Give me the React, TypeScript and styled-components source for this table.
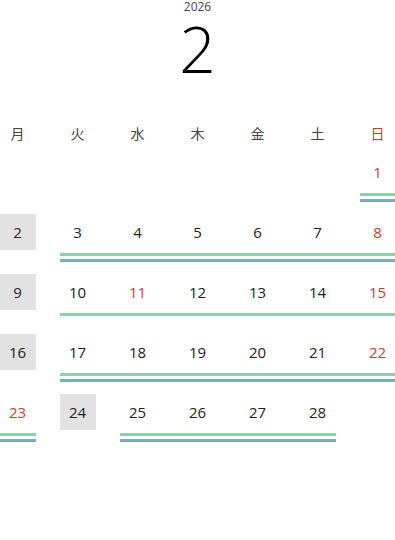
import React from 'react';
import styled, { createGlobalStyle } from 'styled-components';

const GlobalStyle = createGlobalStyle`
  html, body {
    margin: 0;
    padding: 0;
    background: #ffffff;
    overflow: hidden;
  }
  body {
    font-family: "Open Sans", "Noto Sans CJK JP", sans-serif;
  }
`;

const Page = styled.div`
  width: 395px;
  height: 540px;
  display: flex;
  flex-direction: column;
  align-items: center;
`;

const Year = styled.div`
  font-size: 12px;
  line-height: 14px;
  color: #444;
`;

const Month = styled.div`
  margin-top: 6px;
  font-size: 64px;
  line-height: 58px;
  font-weight: 300;
  color: #000;
`;

const Calendar = styled.div`
  flex: 0 0 auto;
  width: 420px;
  margin-top: 37px;
`;

const Weekdays = styled.div`
  display: grid;
  grid-template-columns: repeat(7, 60px);
  height: 36px;
  align-items: center;
  margin-bottom: 3px;
`;

const Weekday = styled.div<{ $red?: boolean }>`
  text-align: center;
  font-family: "Noto Sans CJK JP", sans-serif;
  font-size: 14px;
  font-weight: 400;
  color: ${(p) => (p.$red ? '#d63a1e' : '#444')};
`;

const Week = styled.div`
  display: grid;
  grid-template-columns: repeat(7, 60px);
  grid-template-rows: 36px 3px 3px 3px 3px;
  margin-bottom: 12px;
`;

const Day = styled.div<{ $col: number; $red?: boolean; $marked?: boolean }>`
  grid-row: 1;
  grid-column: ${(p) => p.$col + 1};
  justify-self: center;
  width: 36px;
  height: 36px;
  display: flex;
  align-items: center;
  justify-content: center;
  font-size: 15px;
  color: ${(p) => (p.$red ? '#d63a1e' : '#222')};
  background: ${(p) => (p.$marked ? '#e2e2e2' : 'transparent')};
`;

const Line = styled.div<{ $from: number; $to: number; $kind: 'green' | 'blue' }>`
  grid-row: ${(p) => (p.$kind === 'green' ? 3 : 5)};
  grid-column: ${(p) => p.$from + 1} / ${(p) => p.$to + 2};
  margin: 0 12px;
  background: ${(p) => (p.$kind === 'green' ? '#74dea6' : '#70add3')};
`;

type Cell = { col: number; day: number; red?: boolean; marked?: boolean };
type Span = { from: number; to: number; kinds: ('green' | 'blue')[] };

const holidays = [11, 23];
const marked = [2, 9, 16, 24];

// Feb 2026 starts on Sunday (last column, Monday-first week)
const buildWeeks = (): Cell[][] => {
  const weeks: Cell[][] = [];
  let week: Cell[] = [];
  for (let d = 1; d <= 28; d++) {
    const col = (d + 5) % 7;
    week.push({ col, day: d, red: col === 6 || holidays.includes(d), marked: marked.includes(d) });
    if (col === 6) {
      weeks.push(week);
      week = [];
    }
  }
  if (week.length) weeks.push(week);
  return weeks;
};

const spans: Span[][] = [
  [{ from: 6, to: 6, kinds: ['green', 'blue'] }],
  [{ from: 1, to: 6, kinds: ['green', 'blue'] }],
  [{ from: 1, to: 6, kinds: ['green'] }],
  [{ from: 1, to: 6, kinds: ['green', 'blue'] }],
  [
    { from: 0, to: 0, kinds: ['green', 'blue'] },
    { from: 2, to: 5, kinds: ['green', 'blue'] },
  ],
];

const weekdayNames = ['月', '火', '水', '木', '金', '土', '日'];

export default function App() {
  const weeks = buildWeeks();
  return (
    <>
      <GlobalStyle />
      <Page>
        <Year>2026</Year>
        <Month>2</Month>
        <Calendar>
          <Weekdays>
            {weekdayNames.map((w, i) => (
              <Weekday key={w} $red={i === 6}>{w}</Weekday>
            ))}
          </Weekdays>
          {weeks.map((cells, wi) => (
            <Week key={wi}>
              {cells.map((c) => (
                <Day key={c.day} $col={c.col} $red={c.red} $marked={c.marked}>
                  {c.day}
                </Day>
              ))}
              {spans[wi].map((s) =>
                s.kinds.map((k) => (
                  <Line key={`${s.from}-${k}`} $from={s.from} $to={s.to} $kind={k} />
                ))
              )}
            </Week>
          ))}
        </Calendar>
      </Page>
    </>
  );
}
